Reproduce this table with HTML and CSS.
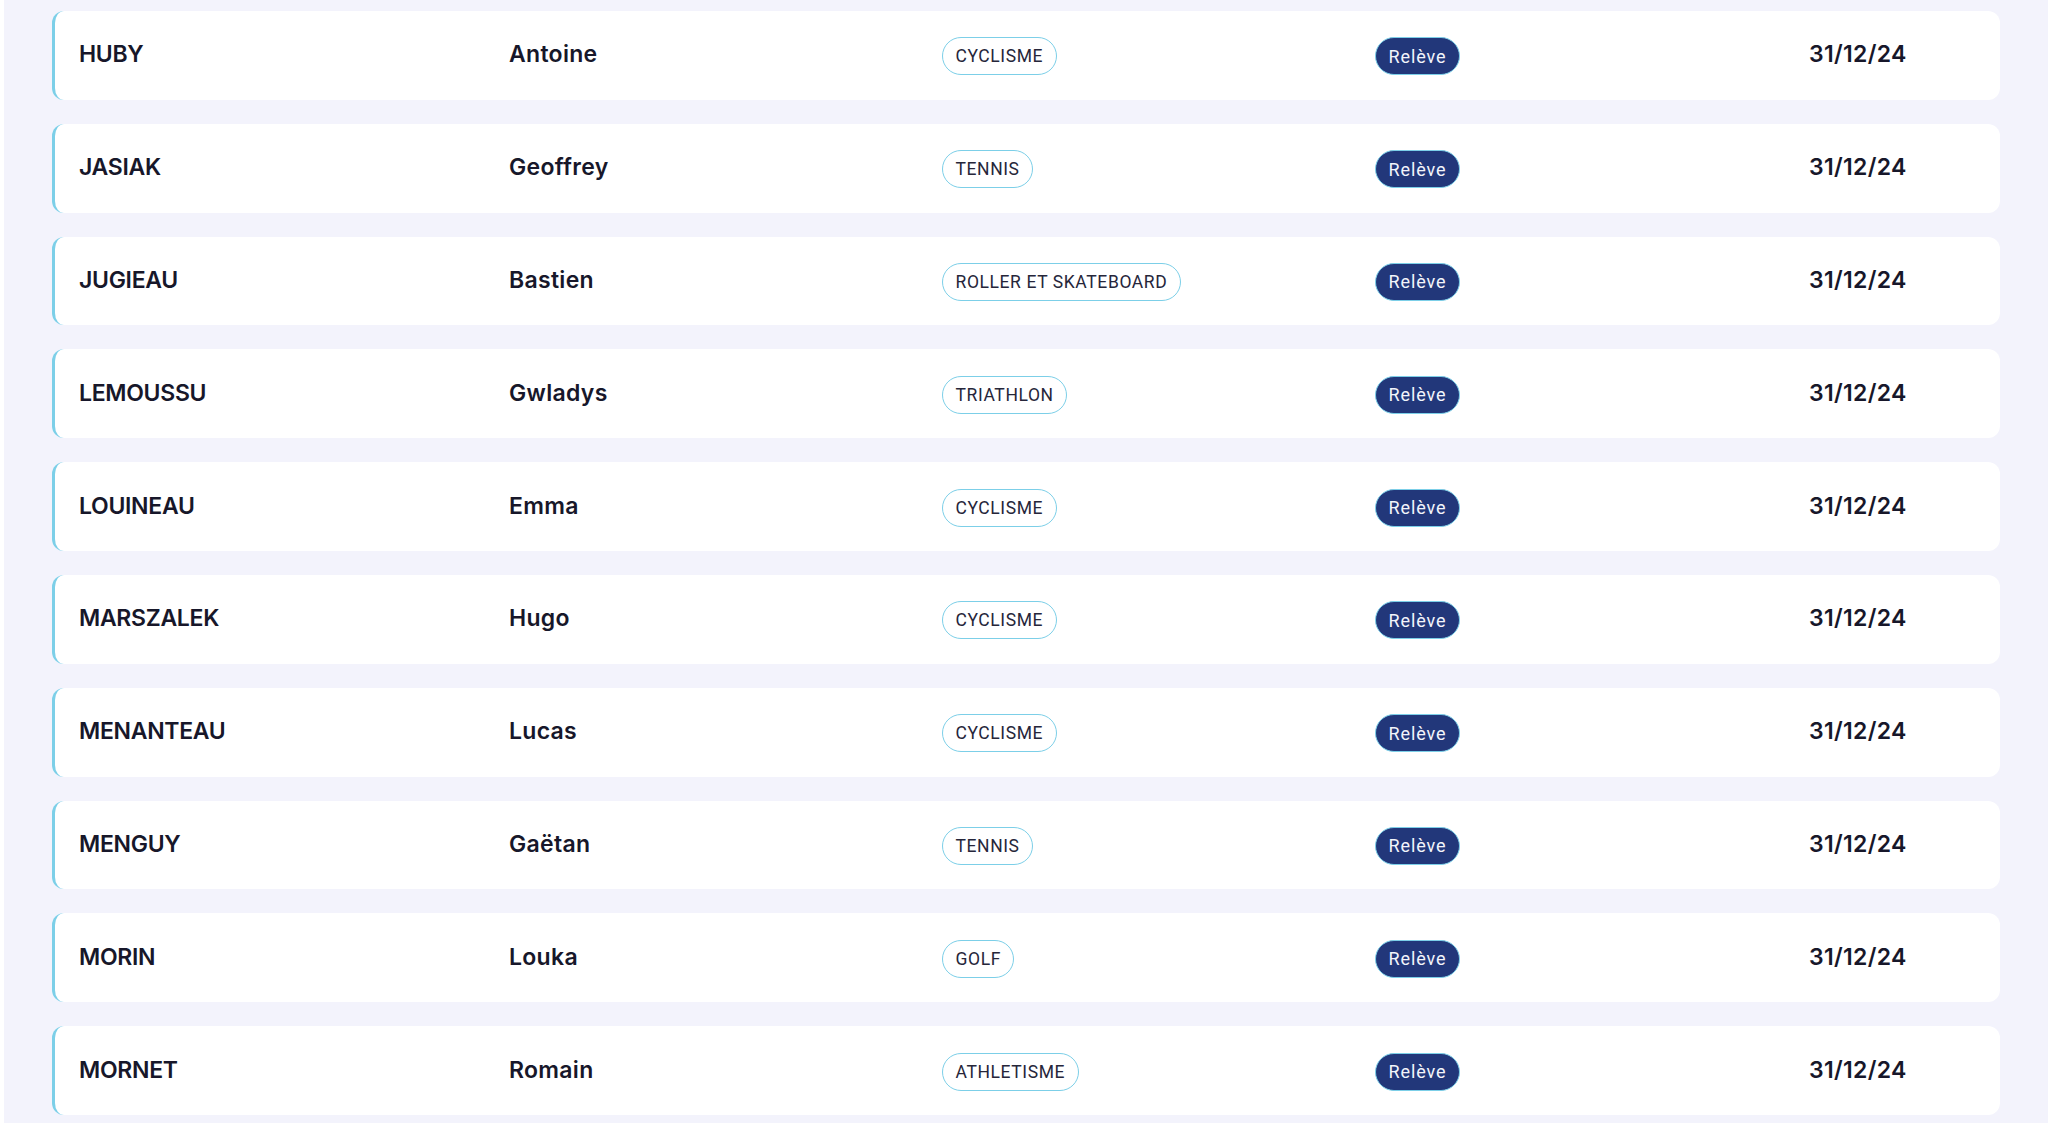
FILE: index.html
```html
<!DOCTYPE html>
<html lang="fr">
<head>
<meta charset="utf-8">
<title>Liste</title>
<link rel="stylesheet" href="styles.css">
</head>
<body>
<main class="page">
  <div class="row"><span class="last">HUBY</span><span class="first">Antoine</span><span class="cell"><span class="sport">CYCLISME</span></span><span class="cell"><span class="level">Relève</span></span><span class="date">31/12/24</span></div>
  <div class="row"><span class="last">JASIAK</span><span class="first">Geoffrey</span><span class="cell"><span class="sport">TENNIS</span></span><span class="cell"><span class="level">Relève</span></span><span class="date">31/12/24</span></div>
  <div class="row"><span class="last">JUGIEAU</span><span class="first">Bastien</span><span class="cell"><span class="sport">ROLLER ET SKATEBOARD</span></span><span class="cell"><span class="level">Relève</span></span><span class="date">31/12/24</span></div>
  <div class="row"><span class="last">LEMOUSSU</span><span class="first">Gwladys</span><span class="cell"><span class="sport">TRIATHLON</span></span><span class="cell"><span class="level">Relève</span></span><span class="date">31/12/24</span></div>
  <div class="row"><span class="last">LOUINEAU</span><span class="first">Emma</span><span class="cell"><span class="sport">CYCLISME</span></span><span class="cell"><span class="level">Relève</span></span><span class="date">31/12/24</span></div>
  <div class="row"><span class="last">MARSZALEK</span><span class="first">Hugo</span><span class="cell"><span class="sport">CYCLISME</span></span><span class="cell"><span class="level">Relève</span></span><span class="date">31/12/24</span></div>
  <div class="row"><span class="last">MENANTEAU</span><span class="first">Lucas</span><span class="cell"><span class="sport">CYCLISME</span></span><span class="cell"><span class="level">Relève</span></span><span class="date">31/12/24</span></div>
  <div class="row"><span class="last">MENGUY</span><span class="first">Gaëtan</span><span class="cell"><span class="sport">TENNIS</span></span><span class="cell"><span class="level">Relève</span></span><span class="date">31/12/24</span></div>
  <div class="row"><span class="last">MORIN</span><span class="first">Louka</span><span class="cell"><span class="sport">GOLF</span></span><span class="cell"><span class="level">Relève</span></span><span class="date">31/12/24</span></div>
  <div class="row"><span class="last">MORNET</span><span class="first">Romain</span><span class="cell"><span class="sport">ATHLETISME</span></span><span class="cell"><span class="level">Relève</span></span><span class="date">31/12/24</span></div>
</main>
</body>
</html>
```

FILE: styles.css
```css
html, body {
  margin: 0;
  padding: 0;
  background: #ffffff;
  height: 100%;
  overflow: hidden;
}

.page {
  margin-left: 4px;
  min-height: 100vh;
  box-sizing: border-box;
  background: #f3f3fc;
  padding: 11px 48px 0 48px;
  display: flex;
  flex-direction: column;
  gap: 24px;
  font-family: "Inter", "Lato", sans-serif;
  color: #17172a;
}

.row {
  height: 88.8px;
  box-sizing: border-box;
  flex-shrink: 0;
  background: #ffffff;
  border-radius: 12px;
  border-left: 3px solid #7ccfe8;
  padding-left: 24px;
  display: grid;
  grid-template-columns: 430px 433px 433px 434px 1fr;
  align-items: center;
}

.last, .first {
  font-size: 23px;
  font-weight: 600;
  margin-top: -2px;
}

.first {
  letter-spacing: 0.3px;
}

.last {
  letter-spacing: -0.3px;
}

.cell {
  display: flex;
  align-items: center;
  padding-top: 2px;
}

.sport {
  display: inline-flex;
  align-items: center;
  height: 38px;
  box-sizing: border-box;
  padding: 0 12.5px;
  border: 1.5px solid #7ccfe8;
  border-radius: 19px;
  font-family: "Roboto", "Liberation Sans", sans-serif;
  font-size: 17.5px;
  letter-spacing: 0.6px;
  color: #26263a;
}

.level {
  display: inline-flex;
  align-items: center;
  height: 38px;
  box-sizing: border-box;
  padding: 0 12.5px;
  border: 1.5px solid #7ccfe8;
  border-radius: 19px;
  background: #22377a;
  font-family: "Roboto", "Liberation Sans", sans-serif;
  font-size: 18px;
  letter-spacing: 0.9px;
  color: #f2f4fb;
}

.date {
  font-size: 23px;
  font-weight: 600;
  letter-spacing: 0.3px;
  margin-top: -2px;
}
```
